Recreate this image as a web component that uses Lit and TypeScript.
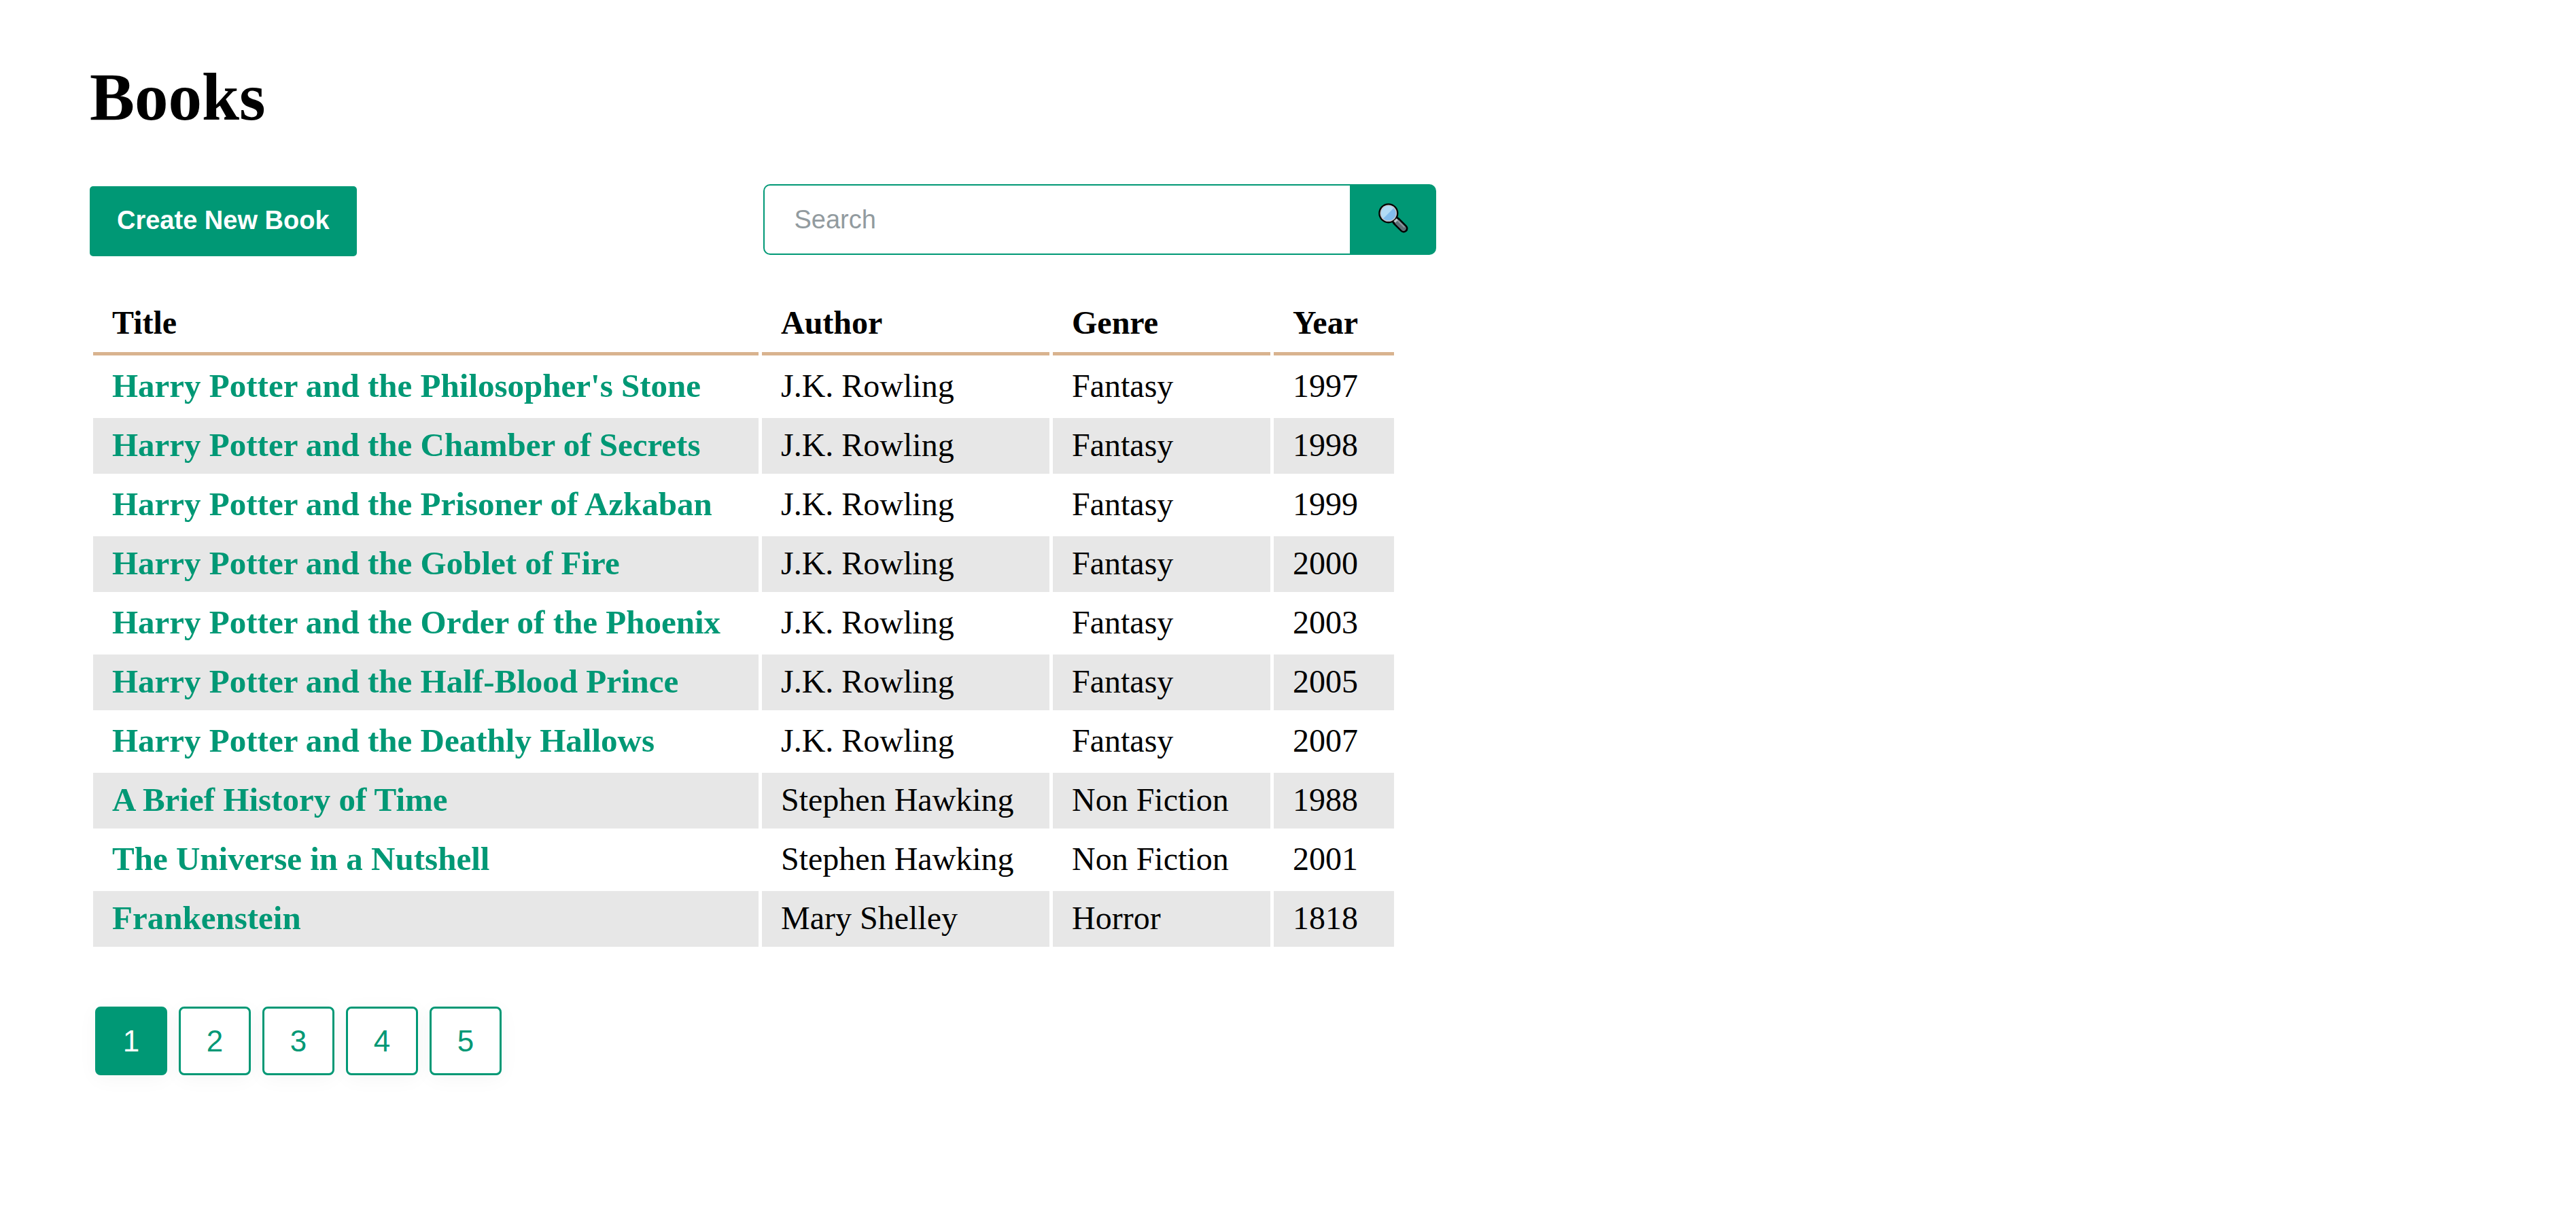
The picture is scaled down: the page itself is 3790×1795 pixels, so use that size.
import { LitElement, html, css } from "lit";
import { customElement, property, state } from "lit/decorators.js";
import { classMap } from "lit/directives/class-map.js";

interface Book {
  title: string;
  author: string;
  genre: string;
  year: number;
}

const BOOKS: Book[] = [
  { title: "Harry Potter and the Philosopher's Stone", author: "J.K. Rowling", genre: "Fantasy", year: 1997 },
  { title: "Harry Potter and the Chamber of Secrets", author: "J.K. Rowling", genre: "Fantasy", year: 1998 },
  { title: "Harry Potter and the Prisoner of Azkaban", author: "J.K. Rowling", genre: "Fantasy", year: 1999 },
  { title: "Harry Potter and the Goblet of Fire", author: "J.K. Rowling", genre: "Fantasy", year: 2000 },
  { title: "Harry Potter and the Order of the Phoenix", author: "J.K. Rowling", genre: "Fantasy", year: 2003 },
  { title: "Harry Potter and the Half-Blood Prince", author: "J.K. Rowling", genre: "Fantasy", year: 2005 },
  { title: "Harry Potter and the Deathly Hallows", author: "J.K. Rowling", genre: "Fantasy", year: 2007 },
  { title: "A Brief History of Time", author: "Stephen Hawking", genre: "Non Fiction", year: 1988 },
  { title: "The Universe in a Nutshell", author: "Stephen Hawking", genre: "Non Fiction", year: 2001 },
  { title: "Frankenstein", author: "Mary Shelley", genre: "Horror", year: 1818 },
];

@customElement("book-search")
export class BookSearch extends LitElement {
  static styles = css`
    :host {
      display: block;
    }
    .search {
      display: flex;
    }
    .field {
      flex: 1;
      min-width: 0;
      box-sizing: border-box;
      height: 104px;
      padding: 0 44px;
      border: 2px solid #009875;
      border-right: 0;
      border-radius: 10px 0 0 10px;
      background: #fff;
      color: #000;
      font: 38px "Liberation Sans", Arial, sans-serif;
      outline: none;
    }
    .field::placeholder {
      color: #929b9f;
      opacity: 1;
    }
    .submit {
      display: flex;
      align-items: center;
      justify-content: center;
      width: 127px;
      padding: 0 0 4px;
      border: 0;
      border-radius: 0 10px 10px 0;
      background: #009875;
      cursor: pointer;
    }
    .icon {
      display: block;
      width: 44px;
      height: 44px;
    }
  `;

  render() {
    return html`
      <form class="search" role="search" @submit=${(e: Event) => e.preventDefault()}>
        <input class="field" type="text" placeholder="Search" aria-label="Search" />
        <button class="submit" type="submit" aria-label="Search">
          <svg class="icon" viewBox="0 0 44 44" aria-hidden="true">
            <path d="M26 26 L37.200 37.200" stroke="#000" stroke-width="12.500" stroke-linecap="round" />
            <circle cx="14.800" cy="14.800" r="14.600" fill="#000" />
            <path d="M28 28 L37 37" stroke="#5f6f76" stroke-width="7.500" stroke-linecap="round" />
            <path d="M28.500 25.500 L38.500 35.500" stroke="#8b989e" stroke-width="2" />
            <path d="M23.500 27.500 L28 23.500" stroke="#bdc6c9" stroke-width="3.500" />
            <circle cx="14.800" cy="14.800" r="12.300" fill="#c9c5c9" />
            <circle cx="14.800" cy="14.800" r="10.800" fill="#82bcec" />
            <path d="M7.200 22.400 A10.700 10.700 0 0 1 22.400 7.200 Z" fill="#b2dbf5" />
          </svg>
        </button>
      </form>
    `;
  }
}

@customElement("book-table")
export class BookTable extends LitElement {
  @property({ attribute: false }) books: Book[] = [];

  static styles = css`
    :host {
      display: block;
    }
    .table {
      border-collapse: separate;
      border-spacing: 5px;
      font-size: 48px;
      line-height: 56px;
      text-align: left;
      white-space: nowrap;
    }
    .cell {
      padding: 12px 28px 14px;
    }
    .head {
      padding: 11px 28px 15px;
      border-bottom: 5px solid #d9b38f;
      font-weight: 700;
    }
    .title {
      width: 923px;
    }
    .author {
      width: 367px;
    }
    .genre {
      width: 264px;
    }
    .year {
      width: 121px;
    }
    .row:nth-child(even) .cell {
      background: #e7e7e7;
    }
    .name {
      font-size: 49px;
    }
    .link {
      color: #009875;
      font-weight: 700;
      text-decoration: none;
    }
  `;

  render() {
    return html`
      <table class="table">
        <thead>
          <tr>
            <th class="head title" scope="col">Title</th>
            <th class="head author" scope="col">Author</th>
            <th class="head genre" scope="col">Genre</th>
            <th class="head year" scope="col">Year</th>
          </tr>
        </thead>
        <tbody>
          ${this.books.map(
            (book) => html`
              <tr class="row">
                <td class="cell name"><a class="link" href="#">${book.title}</a></td>
                <td class="cell">${book.author}</td>
                <td class="cell">${book.genre}</td>
                <td class="cell">${book.year}</td>
              </tr>
            `
          )}
        </tbody>
      </table>
    `;
  }
}

@customElement("page-nav")
export class PageNav extends LitElement {
  @property({ type: Number }) pages = 1;
  @state() private current = 1;

  static styles = css`
    :host {
      display: block;
    }
    .pages {
      display: flex;
      gap: 17px;
      padding: 0 8px;
    }
    .page {
      width: 106px;
      height: 101px;
      padding: 0;
      border: 3px solid #009875;
      border-radius: 8px;
      background: #fff;
      box-shadow: 0 5px 30px rgba(0, 0, 0, 0.04);
      color: #009875;
      font: 44px "Liberation Sans", Arial, sans-serif;
      cursor: pointer;
    }
    .active {
      background: #009875;
      color: #fff;
    }
  `;

  render() {
    const numbers = Array.from({ length: this.pages }, (_, i) => i + 1);
    return html`
      <nav class="pages" aria-label="Pagination">
        ${numbers.map(
          (n) => html`<button
            type="button"
            class=${classMap({ page: true, active: n === this.current })}
            aria-current=${n === this.current ? "page" : "false"}
            @click=${() => (this.current = n)}
          >${n}</button>`
        )}
      </nav>
    `;
  }
}

@customElement("app-root")
export class AppRoot extends LitElement {
  static styles = css`
    :host {
      display: block;
      padding: 88px 132px;
      background: #fff;
      color: #000;
      font-family: Baskerville, "Liberation Serif", "Times New Roman", serif;
    }
    .heading {
      margin: 0 0 73px;
      font-size: 99px;
      line-height: 110px;
      font-weight: 700;
    }
    .toolbar {
      display: flex;
      align-items: flex-start;
      max-width: 1981px;
      margin-bottom: 54px;
    }
    .actions,
    .search {
      flex: 1;
    }
    .create {
      display: inline-block;
      margin-top: 3px;
      padding: 28px 40px 30px;
      border: 0;
      border-radius: 5px;
      background: #009875;
      color: #fff;
      font: 700 38px/45px "Liberation Sans", Arial, sans-serif;
      cursor: pointer;
      vertical-align: top;
    }
    .books {
      margin-bottom: 83px;
    }
  `;

  render() {
    return html`
      <main>
        <h1 class="heading">Books</h1>
        <div class="toolbar">
          <div class="actions">
            <button class="create" type="button">Create New Book</button>
          </div>
          <book-search class="search"></book-search>
        </div>
        <book-table class="books" .books=${BOOKS}></book-table>
        <page-nav .pages=${5}></page-nav>
      </main>
    `;
  }
}
